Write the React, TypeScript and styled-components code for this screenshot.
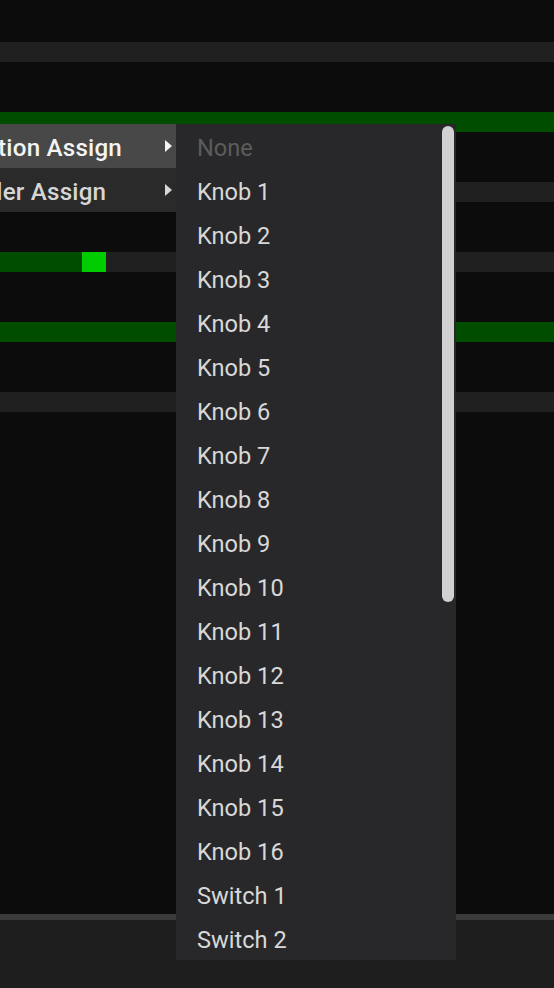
import { styled, createGlobalStyle } from "styled-components";

const GlobalStyle = createGlobalStyle`
  html, body {
    margin: 0;
    padding: 0;
    background: #0c0c0c;
    font-family: Roboto, "Liberation Sans", sans-serif;
  }
  * { box-sizing: border-box; }
`;

type Track = { kind: "empty" | "full" | "partial"; fill?: number; marker?: number };

const tracks: Track[] = [
  { kind: "empty" },
  { kind: "full" },
  { kind: "empty" },
  { kind: "partial", fill: 82, marker: 24 },
  { kind: "full" },
  { kind: "empty" },
];

const options = [
  "None",
  ...Array.from({ length: 16 }, (_, i) => `Knob ${i + 1}`),
  "Switch 1",
  "Switch 2",
];

const Arrow = () => (
  <svg width="9" height="14" viewBox="0 0 9 14">
    <path d="M1 1 L8 7 L1 13 Z" fill="currentColor" />
  </svg>
);

export default function App() {
  return (
    <>
      <GlobalStyle />
      <Page>
        <TrackList>
          {tracks.map((t, i) => (
            <Bar key={i} $full={t.kind === "full"}>
              {t.kind === "partial" && (
                <>
                  <Fill style={{ width: t.fill }} />
                  <Marker style={{ width: t.marker }} />
                </>
              )}
            </Bar>
          ))}
        </TrackList>
        <Footer />

        <ContextMenu>
          <MenuItem $active>
            <MenuLabel>Modulation Assign</MenuLabel>
            <Arrow />
          </MenuItem>
          <MenuItem>
            <MenuLabel>Controller Assign</MenuLabel>
            <Arrow />
          </MenuItem>
        </ContextMenu>

        <SubMenu>
          {options.map((o, i) => (
            <SubItem key={o} $disabled={i === 0}>
              {o}
            </SubItem>
          ))}
          <ScrollThumb />
        </SubMenu>
      </Page>
    </>
  );
}

const Page = styled.div`
  position: relative;
  display: flex;
  flex-direction: column;
  height: 100vh;
  overflow: hidden;
  background: #0c0c0c;
`;

const TrackList = styled.div`
  flex: 1;
  display: flex;
  flex-direction: column;
  gap: 50px;
  padding-top: 42px;
`;

const Bar = styled.div<{ $full?: boolean }>`
  display: flex;
  height: 20px;
  background: ${(p) => (p.$full ? "#004d00" : "#202020")};
`;

const Fill = styled.div`
  height: 100%;
  background: #004d00;
`;

const Marker = styled.div`
  height: 100%;
  background: #00cc00;
`;

const Footer = styled.div`
  height: 74px;
  border-top: 6px solid #3b3b3b;
  background: #1e1e1e;
`;

const ContextMenu = styled.div`
  position: absolute;
  top: 124px;
  right: calc(100% - 176px);
  background: #2a2a2b;
`;

const MenuItem = styled.div<{ $active?: boolean }>`
  display: flex;
  align-items: center;
  justify-content: space-between;
  gap: 42px;
  height: 44px;
  padding: 3px 3px 0 20px;
  font-size: 24.2px;
  font-weight: 500;
  letter-spacing: 0.2px;
  color: ${(p) => (p.$active ? "#f4f4f4" : "#d6d6d6")};
  background: ${(p) => (p.$active ? "#484848" : "transparent")};

  svg {
    margin-top: -3px;
  }
`;

const MenuLabel = styled.span`
  white-space: nowrap;
`;

const SubMenu = styled.div`
  position: absolute;
  top: 124px;
  left: 176px;
  width: 280px;
  background: #28282a;
`;

const SubItem = styled.div<{ $disabled?: boolean }>`
  display: flex;
  align-items: center;
  height: 44px;
  padding: 3px 0 0 21px;
  font-size: 23.6px;
  color: ${(p) => (p.$disabled ? "#5c5c5c" : "#d8d8d8")};
`;

const ScrollThumb = styled.div`
  position: absolute;
  top: 2px;
  right: 2px;
  width: 12px;
  height: 476px;
  border-radius: 6px;
  background: #d0d0d0;
`;
